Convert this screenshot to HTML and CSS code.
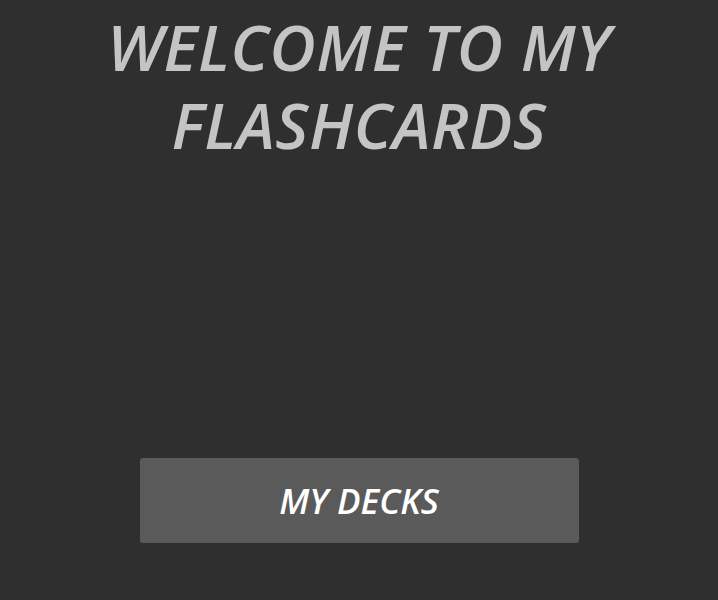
FILE: index.html
```html
<!DOCTYPE html>
<html>
<head>
<meta charset="utf-8">
<link rel="stylesheet" href="styles.css">
</head>
<body>
<main class="page">
  <h1 class="title">WELCOME TO MY FLASHCARDS</h1>
  <button class="decks">MY DECKS</button>
</main>
</body>
</html>
```
FILE: styles.css
```css
html, body {
  margin: 0;
  padding: 0;
  background: #2f2f2f;
  height: 100%;
}
.page {
  display: flex;
  flex-direction: column;
  align-items: center;
  font-family: "Open Sans", "Noto Sans", sans-serif;
  font-style: italic;
}
.title {
  margin: 8px 0 0;
  width: 620px;
  text-align: center;
  font-size: 64px;
  line-height: 78px;
  font-weight: 600;
  color: #c4c4c4;
  letter-spacing: 0.5px;
}
.decks {
  margin-top: 294px;
  width: 439px;
  height: 85px;
  border: none;
  border-radius: 3px;
  background: #5a5a5b;
  color: #ffffff;
  font-family: inherit;
  font-style: italic;
  font-weight: 600;
  font-size: 35px;
  letter-spacing: 0;
}
```
